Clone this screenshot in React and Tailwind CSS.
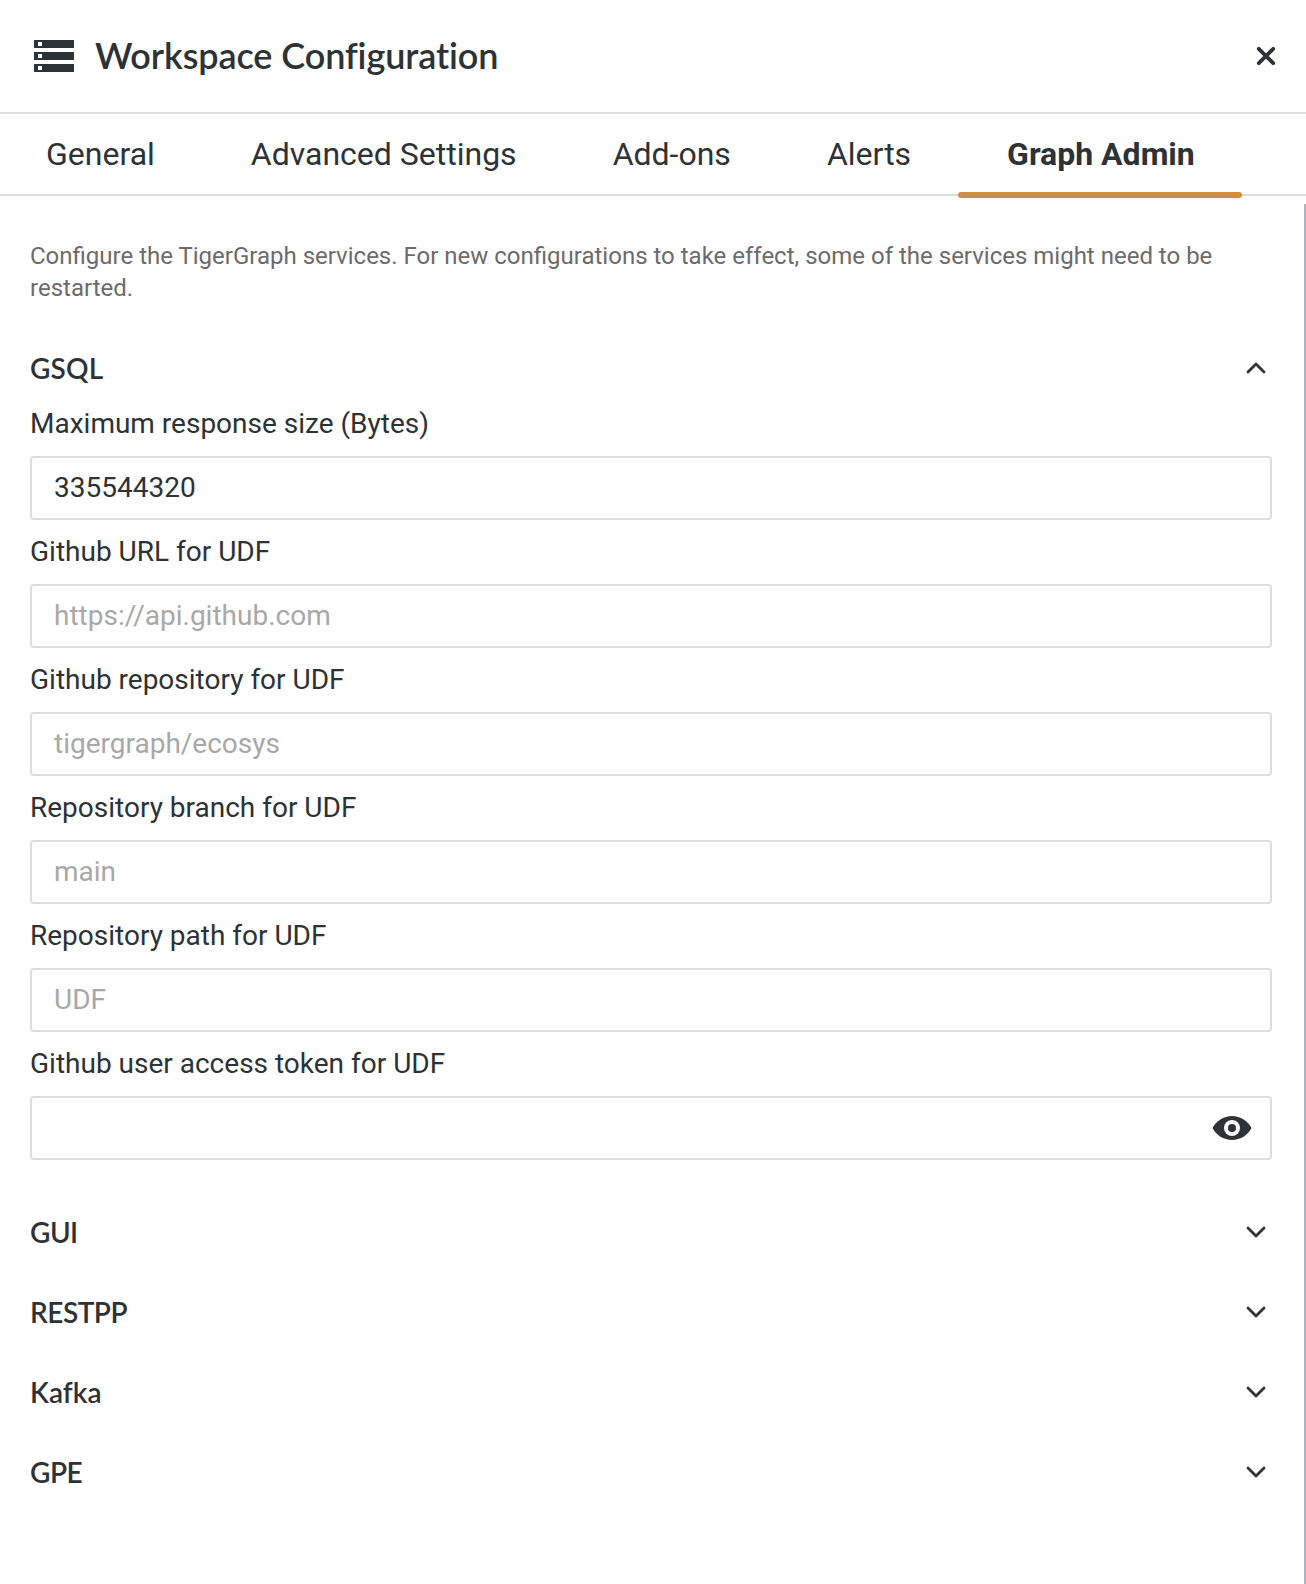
const INK = 'text-[#2c3235]';

const tabs = ['General', 'Advanced Settings', 'Add-ons', 'Alerts', 'Graph Admin'];

const fields = [
  { label: 'Maximum response size (Bytes)', value: '335544320' },
  { label: 'Github URL for UDF', placeholder: 'https://api.github.com' },
  { label: 'Github repository for UDF', placeholder: 'tigergraph/ecosys' },
  { label: 'Repository branch for UDF', placeholder: 'main' },
  { label: 'Repository path for UDF', placeholder: 'UDF' },
  { label: 'Github user access token for UDF', secret: true },
];

const titles = [
  { name: 'GUI', spacing: 'tracking-[-0.5px]' },
  { name: 'RESTPP', spacing: 'tracking-[-0.5px]' },
  { name: 'Kafka', spacing: 'tracking-[0.1px]' },
  { name: 'GPE', spacing: 'tracking-[-0.5px]' },
];

function StorageIcon() {
  return (
    <svg viewBox="0 0 24 24" className="size-12 shrink-0" fill="currentColor">
      <path d="M2 20h20v-4H2v4zm2-3h2v2H4v-2zM2 4v4h20V4H2zm4 3H4V5h2v2zm-4 7h20v-4H2v4zm2-3h2v2H4v-2z" />
    </svg>
  );
}

function CloseIcon() {
  return (
    <svg viewBox="0 0 24 24" className="size-6" fill="none" stroke="currentColor" strokeWidth="3.8" strokeLinecap="round">
      <path d="M4.8 4.8l14.4 14.4M19.2 4.8L4.8 19.2" />
    </svg>
  );
}

function Chevron({ up }) {
  return (
    <svg viewBox="0 0 32 32" className="size-8 shrink-0" fill="none" stroke="currentColor" strokeWidth="2.8">
      <path d={up ? 'M8 20L16 12L24 20' : 'M8 12L16 20L24 12'} strokeLinecap="round" strokeLinejoin="round" />
    </svg>
  );
}

function EyeIcon() {
  return (
    <svg viewBox="0 0 40 24" className="h-6 w-10">
      <path d="M.5 12C4 5 11.5 0 20 0s16 5 19.5 12C36 19 28.5 24 20 24S4 19 .5 12z" fill="currentColor" />
      <circle cx="20" cy="12" r="6" fill="none" stroke="#fff" strokeWidth="4" />
    </svg>
  );
}

function SectionHeader({ name, open, spacing }) {
  return (
    <div className="my-5 flex h-10 items-center justify-between pr-8">
      <h2 className={`font-[Lato,sans-serif] text-[28px] leading-10 font-semibold ${spacing}`}>{name}</h2>
      <Chevron up={open} />
    </div>
  );
}

function Field({ label, value, placeholder, secret }) {
  return (
    <div className="flex flex-col gap-3">
      <label className="text-[28px] leading-10">{label}</label>
      <div className="flex h-16 items-center rounded border-2 border-[#dddddd] pr-[18px] pl-[22px]">
        <input
          className="h-full min-w-0 flex-1 pb-0.5 text-[28px] outline-none placeholder:text-[#a8a8a8]"
          defaultValue={value}
          placeholder={placeholder}
        />
        {secret && <EyeIcon />}
      </div>
    </div>
  );
}

export default function App() {
  return (
    <div className={`flex h-[1584px] w-[1306px] flex-col overflow-hidden bg-white font-[Roboto,sans-serif] ${INK}`}>
      <header className="flex h-[114px] shrink-0 items-center border-b-2 border-[#dddddd] pr-7 pl-[30px]">
        <StorageIcon />
        <h1 className="ml-[17px] flex-1 pb-0.5 font-[Lato,sans-serif] text-[36px] font-semibold tracking-[-0.1px]">
          Workspace Configuration
        </h1>
        <button aria-label="Close">
          <CloseIcon />
        </button>
      </header>
      <nav className="flex h-[82px] shrink-0 gap-24 border-b-2 border-[#dddddd] pl-[46px]">
        {tabs.map((tab) => {
          const active = tab === 'Graph Admin';
          return (
            <button key={tab} className={`relative h-20 text-[32px] whitespace-nowrap ${active ? 'font-bold' : ''}`}>
              {tab}
              {active && <span className="absolute -right-[47px] -bottom-1 -left-[49px] h-1.5 rounded-full bg-[#d88a42]" />}
            </button>
          );
        })}
      </nav>
      <main className="mt-2 flex-1 border-r-2 border-[#aab5bf] pt-9 pl-[30px]">
        <p className="mb-6 w-[1242px] text-[24px] leading-8 text-[#6b6b6b]">
          Configure the TigerGraph services. For new configurations to take effect, some of the services might need to
          be restarted.
        </p>
        <section className="flow-root">
          <SectionHeader name="GSQL" open spacing="tracking-[0.2px]" />
          <div className="-mt-1 mb-8 flex w-[1242px] flex-col gap-3">
            {fields.map((field) => (
              <Field key={field.label} {...field} />
            ))}
          </div>
        </section>
        {titles.map((title) => (
          <section key={title.name} className="flow-root">
            <SectionHeader {...title} />
          </section>
        ))}
      </main>
    </div>
  );
}
